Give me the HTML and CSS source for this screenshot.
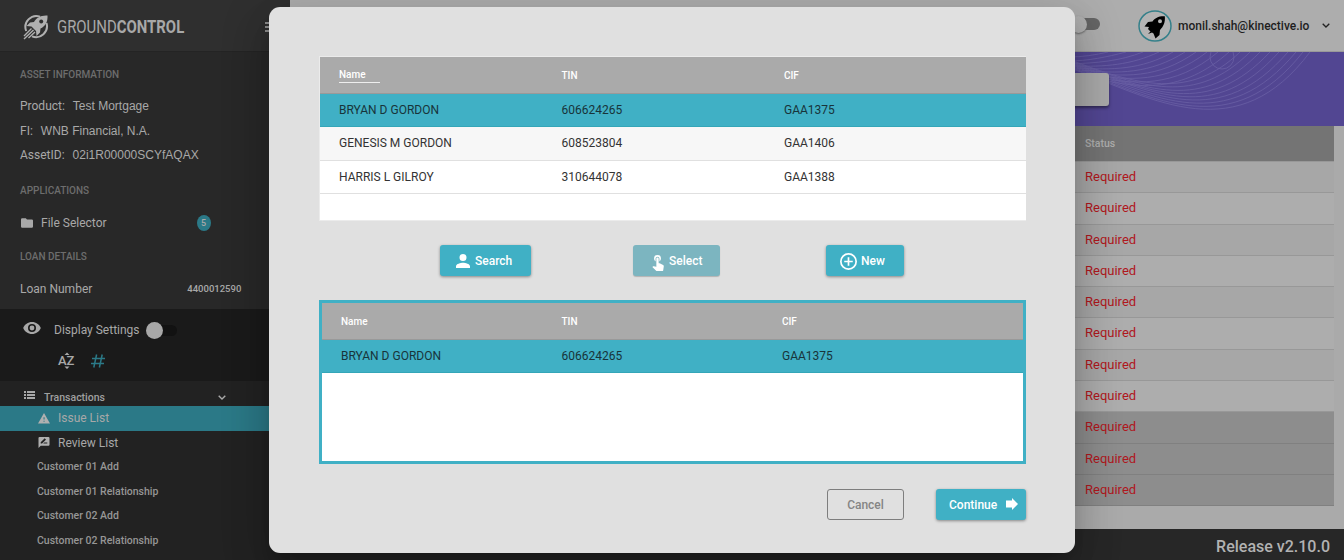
FILE: index.html
```html
<!DOCTYPE html>
<html lang="en">
<head>
<meta charset="utf-8">
<title>Ground Control</title>
<link rel="stylesheet" href="styles.css">
</head>
<body>
<div class="app">
  <aside class="side">
    <header class="brand">
      <svg class="logo" viewBox="0 0 26 26" fill="none" stroke="#b0b0b0" stroke-width="2">
        <path d="M17 2.6A11 11 0 0 0 3.2 17M9 22.4A11 11 0 0 0 23.500 9"/>
        <path d="M24.500 1.500C18 1 13 4 11 8l-4 .5L3.500 12l5 .5 4.500 4.500.5 5L17 18.500l.5-4C22 12.500 25 8 24.500 1.500Z" fill="#b0b0b0" stroke="none"/>
        <circle cx="18.200" cy="7.400" r="2" fill="#2f2f2f" stroke="none"/>
        <path d="M8.500 14.500L1 22M10.500 16L1 25M12 18l-6.500 6" stroke-width="1.400"/>
      </svg>
      <span class="wordmark">GROUND<b>CONTROL</b></span>
      <svg class="burger" viewBox="0 0 12 12" stroke="#b0b0b0" stroke-width="1.400"><path d="M0 2h12M0 6h12M0 10h12"/></svg>
    </header>
    <section class="info">
      <h2 class="cap">ASSET INFORMATION</h2>
      <p class="field"><span>Product:</span><span class="val">Test Mortgage</span></p>
      <p class="field"><span>FI:</span><span class="val">WNB Financial, N.A.</span></p>
      <p class="field"><span>AssetID:</span><span class="val">02i1R00000SCYfAQAX</span></p>
      <h2 class="cap apps">APPLICATIONS</h2>
      <div class="row file">
        <svg class="ic-folder" viewBox="2 4 20 16" fill="#a8a8a8"><path d="M10 4H4a2 2 0 0 0-2 2v12a2 2 0 0 0 2 2h16a2 2 0 0 0 2-2V8a2 2 0 0 0-2-2h-8z"/></svg>
        <span>File Selector</span><span class="count">5</span>
      </div>
      <h2 class="cap loan">LOAN DETAILS</h2>
      <div class="row number"><span>Loan Number</span><b class="loan-no">4400012590</b></div>
    </section>
    <section class="display">
      <div class="row settings">
        <svg class="ic-eye" viewBox="1 4.500 22 15" fill="#a8a8a8"><path d="M12 4.500C7 4.500 2.730 7.610 1 12c1.730 4.390 6 7.500 11 7.500s9.270-3.110 11-7.500c-1.730-4.390-6-7.500-11-7.500zM12 17a5 5 0 1 1 0-10 5 5 0 0 1 0 10zm0-8a3 3 0 1 0 0 6 3 3 0 0 0 0-6z"/></svg>
        <span>Display Settings</span>
        <span class="toggle"><i></i></span>
      </div>
      <div class="row sorts">
        <span class="az"><svg viewBox="0 0 18 18" fill="#a8a8a8"><path d="M6.500 3L9 .5 11.500 3zM6.500 14.500h5L9 17z"/></svg>AZ</span>
        <svg class="ic-hash" viewBox="0 0 14 14" fill="none" stroke="#2b7987" stroke-width="1.500"><path d="M5.600 .5L2.800 13.500M11.200 .5L8.400 13.500M1 4.500h13M0 9.500h13"/></svg>
      </div>
    </section>
    <nav class="nav">
      <div class="trans">
        <svg class="ic-list" viewBox="0 0 11 8" fill="#a8a8a8"><path d="M0 0h2v2H0zM3 0h8v2H3zM0 3h2v2H0zM3 3h8v2H3zM0 6h2v2H0zM3 6h8v2H3z"/></svg>
        <span>Transactions</span>
        <svg class="chev" viewBox="0 0 8 5" fill="none" stroke="#aaa" stroke-width="1.400"><path d="M.7.7L4 4 7.300.7"/></svg>
      </div>
      <a class="item main active"><svg class="ic-item" viewBox="0 0 24 22" fill="#b0b0b0"><path d="M0 21h24L12 0zM13.200 17.500h-2.200v-2.200h2.200zM13.200 13.200h-2.200V8.500h2.200z" fill-rule="evenodd"/></svg>Issue List</a>
      <a class="item main"><svg class="ic-item" viewBox="2 2 20 20" fill="#b0b0b0"><path fill-rule="evenodd" d="M20 2H4a2 2 0 0 0-2 2v18l4-4h14a2 2 0 0 0 2-2V4a2 2 0 0 0-2-2zM6 14v-2.500l6.900-6.900a.5.5 0 0 1 .7 0l1.800 1.800a.5.5 0 0 1 0 .7L8.500 14zm12 0h-7.500l2-2H18z"/></svg>Review List</a>
      <a class="item">Customer 01 Add</a>
      <a class="item">Customer 01 Relationship</a>
      <a class="item">Customer 02 Add</a>
      <a class="item">Customer 02 Relationship</a>
    </nav>
  </aside>
  <main class="page">
    <header class="topbar">
      <span class="switch"><i></i></span>
      <svg class="avatar" viewBox="0 0 34 32"><ellipse cx="17" cy="16" rx="16" ry="15" fill="#b3b3b3" stroke="#35808a" stroke-width="1.500"/><path fill="#000" fill-rule="evenodd" d="M26.800 6.300C20.500 6 17 8 14.500 11.500L10 12l-3.500 4.500 4.500.5-1 2 2.500 2.500-2.500 2.500 4-1.500 1.500 1 2 5 4-3.500.500-5C25.500 16.500 27.500 12 26.800 6.300ZM22 9.200a2 2 0 1 1 0 4 2 2 0 0 1 0-4Z"/></svg>
      <span class="email">monil.shah@kinective.io</span>
      <svg class="chev user-chev" viewBox="0 0 8 5" fill="none" stroke="#222" stroke-width="1.300"><path d="M.7.7L4 4 7.300.7"/></svg>
    </header>
    <section class="hero">
      <svg class="waves" viewBox="0 0 276 74" fill="none" stroke="#6a60a5" stroke-width=".8">
        <path d="M0 15C90 50 170 96 242 0M0 14C90 49 164 90 235 0M0 13C90 47 158 84 228 0M0 12C90 45 152 78 220 0M0 11C90 43 146 72 211 0M0 10C85 41 140 66 202 0M0 9C80 39 134 60 192 0M0 8C75 36 128 54 182 0M0 7C70 34 122 48 172 0M30 27C70 36 114 42 161 0M26 25C65 32 106 37 150 0M22 23C60 28 98 32 139 0M18 20C55 25 90 27 128 0M14 18C50 22 82 22 117 0M9 16C44 18 73 18 105 0M5 14C37 15 63 13 91 0M0 12C30 11 52 9 75 0M0 9C20 9 39 5 58 0M0 5C15 5 27 3 40 0"/>
        <circle cx="154" cy="5" r="12"/>
      </svg>
      <div class="hero-card"></div>
    </section>
    <section class="statuses">
      <div class="st head">Status</div>
      <div class="st">Required</div><div class="st alt">Required</div>
      <div class="st">Required</div><div class="st alt">Required</div>
      <div class="st">Required</div><div class="st alt">Required</div>
      <div class="st">Required</div><div class="st alt">Required</div>
      <div class="st dark">Required</div><div class="st dark">Required</div><div class="st dark">Required</div>
    </section>
    <footer class="foot">Release v2.10.0</footer>
  </main>
</div>
<div class="dialog">
  <div class="table results">
    <div class="tr th"><span class="sorted">Name</span><span>TIN</span><span>CIF</span></div>
    <div class="tr sel"><span>BRYAN D GORDON</span><span>606624265</span><span>GAA1375</span></div>
    <div class="tr even"><span>GENESIS M GORDON</span><span>608523804</span><span>GAA1406</span></div>
    <div class="tr"><span>HARRIS L GILROY</span><span>310644078</span><span>GAA1388</span></div>
  </div>
  <div class="actions">
    <button class="btn search"><svg viewBox="4 4 16 16" fill="#fff"><path d="M12 12a4 4 0 1 0 0-8 4 4 0 0 0 0 8zm0 2c-2.670 0-8 1.340-8 4v2h16v-2c0-2.660-5.330-4-8-4z"/></svg>Search</button>
    <button class="btn select"><svg viewBox="3 1 17 22" fill="#fff"><path d="M9 11.240V7.500a2.500 2.500 0 0 1 5 0v3.740c1.210-.81 2-2.180 2-3.740a4.500 4.500 0 0 0-9 0c0 1.560.79 2.930 2 3.740zm9.840 4.630l-4.540-2.260c-.17-.07-.35-.11-.54-.11H13v-6a1.500 1.500 0 0 0-3 0v10.740l-3.430-.72c-.42-.08-.76.030-1.030.3l-.79.800 4.940 4.940c.27.27.65.44 1.060.44h6.790c.75 0 1.330-.55 1.440-1.280l.75-5.270c.1-.68-.27-1.320-.89-1.580z"/></svg>Select</button>
    <button class="btn new"><svg viewBox="2 2 20 20" fill="#fff"><path d="M13 7h-2v4H7v2h4v4h2v-4h4v-2h-4V7zm-1-5a10 10 0 1 0 0 20 10 10 0 0 0 0-20zm0 18a8 8 0 1 1 0-16 8 8 0 0 1 0 16z"/></svg>New</button>
  </div>
  <div class="table chosen">
    <div class="tr th"><span>Name</span><span>TIN</span><span>CIF</span></div>
    <div class="tr sel"><span>BRYAN D GORDON</span><span>606624265</span><span>GAA1375</span></div>
  </div>
  <div class="buttons">
    <button class="cancel">Cancel</button>
    <button class="btn continue">Continue<svg viewBox="0 0 12 12" fill="#fff"><path d="M0 2.500h6V0l6 6-6 6V9.500H0z"/></svg></button>
  </div>
</div>
</body>
</html>
```
FILE: styles.css
```css
* { box-sizing: border-box; }
body { margin: 0; width: 1344px; height: 560px; overflow: hidden; position: relative; background: #a9a9a9; font-family: Roboto, "Liberation Sans", sans-serif; }
h2, p { margin: 0; }
svg { display: block; flex: none; }
.app { display: flex; height: 560px; }

/* Sidebar */
.side { width: 290px; flex: none; background: #282828; color: #a8a8a8; font-size: 12px; }
.brand { height: 52px; background: #2f2f2f; border-bottom: 1px solid #242424; display: flex; align-items: center; padding: 2px 0 0 23px; }
.logo { width: 26px; height: 26px; }
.wordmark { width: 124px; margin-left: 8px; font-size: 19px; line-height: 24px; white-space: nowrap; transform: scaleX(.785); transform-origin: left center; }
.burger { width: 12px; height: 12px; margin-left: 84px; }
.info { height: 257px; }
.cap { font-size: 10px; font-weight: 500; line-height: 14px; color: #6d6d6d; padding: 16px 0 0 20px; }
.field { display: flex; gap: 8px; padding-left: 20px; height: 24.500px; line-height: 24.500px; }
.cap + .field { margin-top: 12px; }
.val { font-family: "Liberation Sans", Arial, sans-serif; font-size: 12px; }
.cap.apps { padding-top: 16px; }
.row { display: flex; align-items: center; }
.file { height: 22px; margin-top: 14px; padding-left: 21px; }
.ic-folder { width: 12px; height: 10px; margin-right: 8px; }
.count { width: 14px; height: 16px; margin-left: 90px; border-radius: 50%; background: #2b7987; text-align: center; font-size: 9px; line-height: 16px; font-weight: 500; }
.cap.loan { padding-top: 16px; }
.number { height: 20px; margin-top: 15px; padding-left: 20px; }
.loan-no { margin-left: 95px; font-size: 9.500px; font-weight: 500; }
.display { height: 72px; background: #1a1a1a; padding-top: 10px; }
.settings { height: 22px; padding-left: 23px; }
.ic-eye { width: 18px; height: 12px; margin-right: 13px; position: relative; top: -2px; }
.toggle { width: 31px; height: 11px; border-radius: 6px; background: #121212; margin-left: 6px; }
.toggle i { display: block; width: 17px; height: 17px; margin-top: -3px; border-radius: 50%; background: #a8a8a8; }
.sorts { height: 20px; margin-top: 10px; padding-left: 58px; }
.az { position: relative; width: 18px; height: 18px; font-size: 13px; line-height: 18px; font-weight: 500; white-space: nowrap; }
.az svg { position: absolute; inset: 0; width: 18px; height: 18px; }
.ic-hash { width: 14px; height: 14px; margin-left: 15px; }
.nav { height: 179px; background: #222; color: #969696; font-size: 10.500px; font-weight: 500; }
.trans { height: 25px; display: flex; align-items: center; padding: 8px 0 0 24px; color: #a0a0a0; }
.ic-list { width: 11px; height: 8px; margin: -6px 9px 0 0; }
.chev { width: 8px; height: 5px; }
.trans .chev { margin-left: 113px; }
.item { height: 24.500px; line-height: 24.500px; display: flex; align-items: center; padding-left: 37px; }
.item.main { padding-left: 38px; font-size: 12px; color: #a8a8a8; font-weight: 400; }
.item.active { background: #2b7987; }
.ic-item { width: 12px; height: 11px; margin-right: 8px; }

/* Page behind the dialog */
.page { flex: 1; display: flex; flex-direction: column; background: #aaa; }
.topbar { height: 52px; background: #adadad; display: flex; align-items: center; padding-left: 782px; border-bottom: 1px solid #999; }
.switch { flex: none; width: 28px; height: 12px; margin-top: -4px; background: #656565; border-radius: 6px; }
.switch i { display: block; width: 17px; height: 17px; margin: -2px 0 0 -2px; border-radius: 50%; background: #b0b0b0; box-shadow: 0 1px 2px #666; }
.avatar { width: 34px; height: 32px; margin-left: 38px; }
.email { margin-left: 6px; font-size: 12px; font-weight: 500; color: #1e1e1e; }
.user-chev { margin-left: 13px; }
.hero { height: 74px; background: #524692; position: relative; padding-top: 21px; }
.waves { position: absolute; right: 0; top: 0; width: 276px; height: 74px; }
.hero-card { position: relative; width: 200px; height: 33px; margin-left: 619px; background: #a9a9a9; border-radius: 3px; box-shadow: 0 2px 3px #302955; }
.statuses { flex: 1; margin-right: 10px; }
.st { height: 31.300px; line-height: 30px; padding-left: 795px; font-size: 13px; color: #b0171d; background: #a7a7a7; border-bottom: 1px solid #989898; }
.st.alt { background: #adadad; }
.st.dark { background: #8d8d8d; border-color: #808080; }
.st.head { height: 36px; line-height: 36px; background: #747474; color: #adadad; font-size: 10.500px; font-weight: 500; }
.foot { height: 31px; background: #272727; color: #b2b2b2; text-align: right; padding-right: 14px; font-size: 16px; line-height: 35px; font-weight: 500; }

/* Dialog */
.dialog { position: absolute; left: 269px; top: 7px; width: 806px; height: 546px; padding: 49px 49px 0 50px; background: #e0e0e0; border-radius: 11px; box-shadow: 0 11px 15px -7px rgba(0,0,0,.2), 0 24px 38px 3px rgba(0,0,0,.14), 0 9px 46px 8px rgba(0,0,0,.12); }
.table { background: #fff; }
.results { height: 165px; border: 1px solid #ebebeb; border-width: 1px 0 1px 1px; }
.tr { display: grid; grid-template-columns: 222.500px 222.500px 1fr; height: 33.300px; line-height: 33px; padding-left: 19px; font-size: 12px; color: #333; border-bottom: 1px solid #e0e0e0; }
.tr.th { height: 37px; line-height: 37px; background: #aaa; color: #fff; font-size: 10px; font-weight: 500; border-color: #999; }
.tr.sel { background: #40b0c5; color: #18343a; border-color: #34a6b8; }
.tr.even { background: #f7f7f7; }
.sorted { width: 41px; height: 26px; line-height: 35px; border-bottom: 1px solid #eee; }
.actions { display: flex; height: 31px; margin: 24px 0; padding-left: 121px; }
.btn { display: flex; align-items: center; border: 0; border-radius: 3px; height: 31px; padding: 1px 0 0 16px; font-family: inherit; font-size: 12px; font-weight: 500; color: #fff; background: #40b0c5; box-shadow: 0 1px 3px rgba(0,0,0,.4); }
.search { width: 91px; }
.search svg { width: 14px; height: 14px; margin-right: 5px; }
.select { width: 87px; margin-left: 102px; padding-left: 18px; background: #7cb5c0; box-shadow: 0 1px 1px rgba(0,0,0,.2); }
.select svg { width: 13px; height: 18px; margin: 1px 5px 0 0; }
.new { width: 78px; margin-left: 106px; padding-left: 14px; }
.new svg { width: 17px; height: 17px; margin-right: 4px; }
.chosen { height: 164px; border: 3px solid #40b0c5; }
.chosen .tr { grid-template-columns: 220.500px 220.500px 1fr; }
.buttons { display: flex; justify-content: flex-end; margin-top: 25px; }
.cancel { width: 77px; height: 31px; padding: 0; border: 1px solid #7e7e7e; border-radius: 3px; background: transparent; color: #858585; font: 500 12px Roboto, sans-serif; }
.continue { width: 90px; margin-left: 32px; padding-left: 13px; }
.continue svg { width: 12px; height: 12px; margin: -3px 0 0 9px; }
```
